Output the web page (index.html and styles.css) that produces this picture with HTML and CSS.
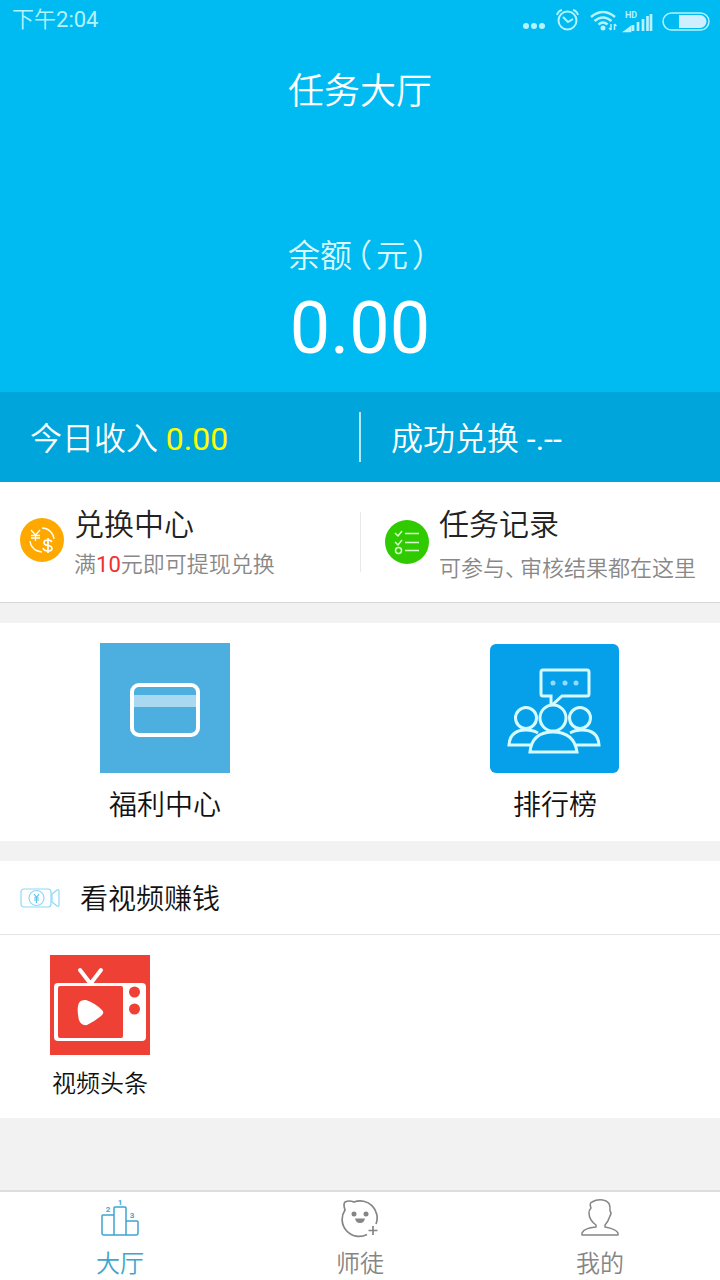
FILE: index.html
```html
<!DOCTYPE html>
<html lang="zh-CN">
<head>
<meta charset="utf-8">
<meta name="viewport" content="width=device-width, initial-scale=1">
<title>任务大厅</title>
<link rel="stylesheet" href="styles.css">
</head>
<body>
<header class="hero">
  <div class="status">
    <span class="status-time">下午<span class="digits">2:04</span></span>
    <svg class="status-icons" width="190" height="32" viewBox="0 1 190 32" fill="none" stroke="#b5f3ff" stroke-width="2" aria-hidden="true">
      <g fill="#b5f3ff" stroke="none"><circle cx="6" cy="23" r="3"/><circle cx="14" cy="23" r="3"/><circle cx="22" cy="23" r="3"/></g>
      <circle cx="47.500" cy="17.500" r="9"/>
      <path d="M43 14l5 5 5-3M37 12q1-4 5-5M58 12q-1-4-5-5"/>
      <path d="M71 14q12-10 24 0M74.500 18q8.500-7 17 0M78.500 21.500q4.500-4 9 0" stroke-width="2.500"/>
      <circle cx="83" cy="25" r="2.500" fill="#b5f3ff" stroke="none"/>
      <path d="M91 21v6M91 27l-2-2M94.500 21v6M94.500 21l2 2" stroke-width="1.500"/>
      <text class="hd" x="105" y="15">HD</text>
      <path d="M106 28l4-3v3zM113 28v-6M118 28v-9M123 28V16M127.500 28V13M131 28V11" stroke-width="2.700"/>
      <rect x="143" y="10" width="46" height="17" rx="8.500" stroke-width="1.500"/>
      <path d="M159 12h21a6.500 6.500 0 0 1 0 13h-21z" fill="#cfefff" stroke="none"/>
    </svg>
  </div>
  <h1 class="hero-title">任务大厅</h1>
  <p class="balance-label">余额<span class="paren">（</span>元<span class="paren">）</span></p>
  <p class="balance">0.00</p>
</header>
<section class="stats">
  <p class="stat">今日收入 <span class="income">0.00</span></p>
  <p class="stat">成功兑换 <span class="digits">-.--</span></p>
</section>
<main class="content">
  <section class="features">
    <a class="feature" href="#exchange">
      <svg class="feature-icon" width="44" height="44" viewBox="0 0 44 44" fill="none" stroke="#fff" aria-hidden="true">
        <circle cx="22" cy="22" r="22" fill="#ffa900" stroke="none"/>
        <path d="M22 10a12 12 0 0 1 12 11M22 34a12 12 0 0 1-12-11" stroke-width="1.300"/>
        <path d="M11 12l4.500 5 4.500-5M15.500 17v6M11 17.500h9M11 20h9" stroke-width="1.300"/>
        <path d="M32 24q-1-2-4-2-4 0-4 2.500t4 3 4 3-4 2.500q-4 0-5-3M28 20v15" stroke-width="1.700"/>
      </svg>
      <div class="feature-text">
        <h2 class="feature-title">兑换中心</h2>
        <p class="feature-desc">满<span class="amount">10</span>元即可提现兑换</p>
      </div>
    </a>
    <a class="feature feature-records" href="#records">
      <svg class="feature-icon" width="44" height="44" viewBox="0 0 44 44" fill="none" stroke="#d9ffd0" stroke-width="1.500" aria-hidden="true">
        <circle cx="22" cy="22" r="22" fill="#2fcb00" stroke="none"/>
        <path d="M10 13l3 3 4-5M20 13.500h14M10 22l3 3 4-5M20 22.500h14M20 30.500h14"/>
        <circle cx="13.500" cy="30.500" r="3"/>
      </svg>
      <div class="feature-text">
        <h2 class="feature-title">任务记录</h2>
        <p class="feature-desc">可参与<span class="pause">、</span>审核结果都在这里</p>
      </div>
    </a>
  </section>
  <section class="shortcuts">
    <a class="shortcut" href="#welfare">
      <svg width="130" height="130" viewBox="0 0 130 130" fill="none" aria-hidden="true">
        <rect width="130" height="130" fill="#4dafe0"/>
        <path d="M32 52h66v12H32z" fill="#a9d8f1"/>
        <rect x="32" y="42" width="66" height="50" rx="7" stroke="#fff" stroke-width="4"/>
      </svg>
      <span>福利中心</span>
    </a>
    <a class="shortcut" href="#ranking">
      <svg width="130" height="130" viewBox="0 0 130 130" fill="none" stroke="#d5faff" stroke-width="3" aria-hidden="true">
        <rect x="0" y="1" width="129" height="129" rx="6" fill="#05a0e9" stroke="none"/>
        <path d="M61 63V53h-8q-2 0-2-2V29q0-2 2-2h44q2 0 2 2v22q0 2-2 2H72z"/>
        <g fill="#8fdcff" stroke="none"><circle cx="63" cy="40" r="2.500"/><circle cx="75" cy="40" r="2.500"/><circle cx="86" cy="40" r="2.500"/></g>
        <circle cx="36" cy="75" r="10.500"/><circle cx="90" cy="75" r="10.500"/>
        <path d="M42 102H19q1-15 17-15 7 0 12 3M86 102h23q-1-15-17-15-7 0-12 3"/>
        <circle cx="63" cy="75" r="13" fill="#05a0e9"/>
        <path d="M40 109q2-20 23-20t24 20z" fill="#05a0e9"/>
      </svg>
      <span>排行榜</span>
    </a>
  </section>
  <section class="videos">
    <h2 class="videos-title">
      <svg width="40" height="20" viewBox="0 0 40 20" fill="none" stroke="#8ed8f5" stroke-width="1.200" aria-hidden="true">
        <rect x="1" y="1" width="30" height="18" rx="3"/>
        <path d="M32 6l5-4q2-1 2 1v14q0 2-2 1l-5-4z"/>
        <circle cx="16.500" cy="10" r="7.500"/>
        <path d="M14 6l2.500 3.500L19 6M16.500 10v5M14 10h5M14 12h5" stroke="#5cc3ee"/>
      </svg>
      <span class="videos-name">看视频赚钱</span>
    </h2>
    <div class="videos-list">
      <a class="video" href="#headlines">
        <svg width="100" height="100" viewBox="0 0 100 100" aria-hidden="true">
          <rect width="100" height="100" fill="#ef4035"/>
          <path d="M30 15l10 13M51 15L41 28" stroke="#fff" stroke-width="4" stroke-linecap="round"/>
          <path fill="#fff" fill-rule="evenodd" d="M8 28h84q4 0 4 4v50q0 4-4 4H8q-4 0-4-4V32q0-4 4-4zM10 31q-2 0-2 2v48q0 2 2 2h61q2 0 2-2V33q0-2-2-2z"/>
          <circle cx="84.500" cy="37" r="5.500" fill="#ef4035"/><circle cx="84.500" cy="54" r="5.500" fill="#ef4035"/>
          <path d="M28 51q1-7 8-6 9 3 16 10 3 3-1 6-6 5-14 9-6 1-8-5-2-8-1-14z" fill="#fff"/>
        </svg>
        <span>视频头条</span>
      </a>
    </div>
  </section>
</main>
<nav class="tabs">
  <a class="tab tab-active" href="#hall">
    <svg width="40" height="40" viewBox="0 0 40 40" fill="none" stroke="currentColor" stroke-width="1.500" aria-hidden="true">
      <path d="M14 37H4q-2 0-2-2V18q0-1 1-1h11M14 37V10q0-1 1-1h10q1 0 1 1v27H14M26 23h11q1 0 1 1v11q0 2-2 2H26"/>
      <g class="rank"><text x="8" y="14">2</text><text x="20" y="7">1</text><text x="32" y="20">3</text></g>
    </svg>
    <span>大厅</span>
  </a>
  <a class="tab" href="#mentor">
    <svg width="40" height="40" viewBox="0 0 40 40" fill="none" stroke="currentColor" stroke-width="1.700" aria-hidden="true">
      <path d="M27 36.500A17 17 0 0 1 5 12Q3 6 5 4q4-2 9 0A17 17 0 0 1 36 26M33 28v9M28.500 32.500h9"/>
      <circle cx="14" cy="16" r="2.500" fill="currentColor" stroke="none"/><circle cx="26" cy="16" r="2.500" fill="currentColor" stroke="none"/>
      <path d="M15 20.500h10q-1 4.500-5 4.500t-5-4.500z" fill="currentColor" stroke="none"/>
    </svg>
    <span>师徒</span>
  </a>
  <a class="tab" href="#mine">
    <svg width="40" height="40" viewBox="0 0 40 40" fill="none" stroke="currentColor" stroke-width="1.500" stroke-linejoin="round" aria-hidden="true">
      <path d="M16 27q-7-5-7-12 0-3 2-5-2-5 1-6 5-3 11-2 8 1 7 11 2 2 0 5-2 6-5 9v2q11 2 13 6v2H2v-2q2-5 14-6z"/>
    </svg>
    <span>我的</span>
  </a>
</nav>
</body>
</html>
```
FILE: styles.css
```css
* { box-sizing: border-box; }

body {
  margin: 0;
  min-height: 100vh;
  display: flex;
  flex-direction: column;
  background: #f2f2f2;
  color: #111;
  font-family: Roboto, "Noto Sans CJK SC", sans-serif;
  font-weight: 350;
}

h1, h2, p { margin: 0; font-weight: inherit; }
a { color: inherit; text-decoration: none; }
svg { display: block; flex: none; }

.digits { font-weight: 400; }

.hero {
  background: #00baf2;
  color: #fff;
  text-align: center;
  padding-bottom: 18px;
}

.status {
  display: flex;
  align-items: center;
  justify-content: space-between;
  height: 40px;
  padding: 0 10px 0 12px;
}

.status-time { font-size: 22px; line-height: 36px; color: #b5f3ff; }
.hd { font: bold 9px Roboto, sans-serif; fill: #b5f3ff; stroke: none; }

.hero-title { font-size: 36px; line-height: 104px; }

.balance-label {
  padding: 88px 0 4px;
  font-size: 32px;
  line-height: 48px;
  color: #d9faff;
}

.paren { font-feature-settings: "halt"; margin: 0 4px; }

.balance {
  font-size: 72px;
  font-weight: 400;
  line-height: 90px;
}

.stats {
  display: flex;
  align-items: center;
  height: 90px;
  background: #00a5db;
  color: #fff;
}

.stat {
  flex: 1;
  padding: 4px 0 0 30px;
  font-size: 32px;
  line-height: 46px;
}

.stat + .stat { border-left: 2px solid #b5e8f8; }
.income { color: #ff0; font-weight: 400; }

.content { flex: 1; }

.features {
  display: grid;
  grid-template-columns: 1fr 1fr;
  background: #fff;
  padding: 30px 0;
  border-bottom: 1px solid #d8d8d8;
}

.feature {
  display: flex;
  align-items: center;
  gap: 10px;
  padding-left: 20px;
  height: 60px;
}

.feature .feature-icon { margin-bottom: 4px; }
.feature-text { padding-top: 2px; }
.feature-title { font-size: 30px; line-height: 44px; color: #222; }
.feature-desc { font-size: 22px; line-height: 36px; color: #888; }
.amount { color: #f03030; font-weight: 400; }

.feature-records { padding-left: 24px; border-left: 1px solid #e8e8e8; }
.feature-records .feature-icon { margin-bottom: 0; }
.feature-records .feature-text { padding-top: 6px; }
.feature-records .feature-desc { padding-top: 4px; }
.pause { font-feature-settings: "halt"; margin-right: 4px; }

.shortcuts {
  display: flex;
  justify-content: space-between;
  margin-top: 20px;
  padding: 20px 100px 13px;
  background: #fff;
}

.shortcut {
  display: flex;
  flex-direction: column;
  align-items: center;
  gap: 11px;
  font-size: 28px;
  line-height: 44px;
}

.videos { margin-top: 20px; background: #fff; }

.videos-title {
  display: flex;
  align-items: center;
  gap: 20px;
  padding: 0 20px;
  font-size: 28px;
  line-height: 69px;
  border-bottom: 1px solid #e4e4e4;
}

.videos-name { padding-top: 4px; }

.videos-list { display: flex; padding: 20px 50px 16px; }

.video {
  display: flex;
  flex-direction: column;
  align-items: center;
  gap: 11px;
  font-size: 24px;
  line-height: 36px;
}

.tabs {
  display: flex;
  background: #fff;
  border-top: 2px solid #ddd;
}

.tab {
  flex: 1;
  display: flex;
  flex-direction: column;
  align-items: center;
  gap: 10px;
  padding-top: 6px;
  font-size: 24px;
  line-height: 32px;
  color: #858585;
}

.tab-active { color: #3da5d0; }
.rank { font: bold 8px Roboto, sans-serif; fill: currentColor; stroke: none; text-anchor: middle; }
```
